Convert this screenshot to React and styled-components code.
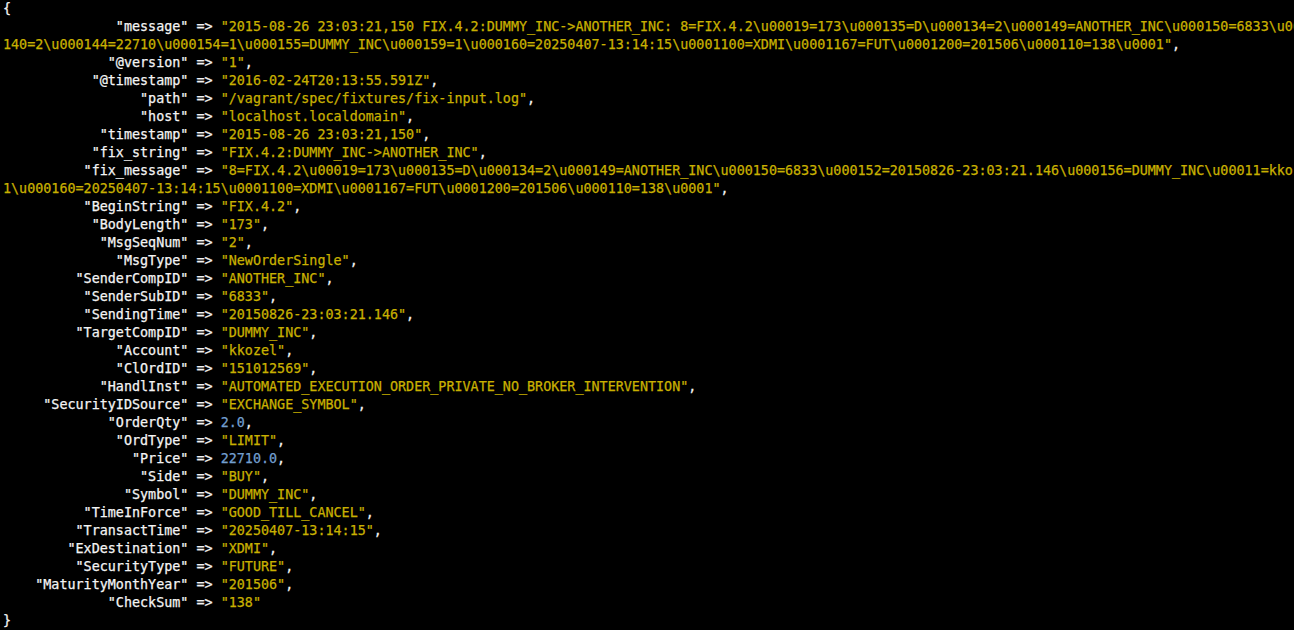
import React from 'react';
import styled, { createGlobalStyle } from 'styled-components';

const GlobalStyle = createGlobalStyle`
  html, body {
    margin:0;
    padding:0;
    background-color:#000;
  }
`;

const StTerminal = styled.div`
  width:1294px;
  height:630px;
  overflow:hidden;
  box-sizing:border-box;
  padding:0 0 0 3px;
  background-color:#000;
  color:#f4f4f4;
  font-family:"DejaVu Sans Mono", "Liberation Mono", monospace;
  font-size:13.4px;
  line-height:18px;
  -webkit-text-stroke:0.25px currentColor;
`;
const StLine = styled.div`
  display:flex;
  white-space:pre;
  height:18px;
`;
const StStr = styled.span`
  color:#c8b000;
`;
const StNum = styled.span`
  color:#729fcf;
`;

const KEY_WIDTH = 19;

const fields = [
  ['message', 's', '2015-08-26 23:03:21,150 FIX.4.2:DUMMY_INC->ANOTHER_INC: 8=FIX.4.2\\u00019=173\\u000135=D\\u000134=2\\u000149=ANOTHER_INC\\u000150=6833\\u000152=20150826-23:03:21.146\\u000156=DUMMY_INC\\u00011=kkozel\\u000111=151012569\\u000121=1\\u000122=8\\u000138=2\\u000', '140=2\\u000144=22710\\u000154=1\\u000155=DUMMY_INC\\u000159=1\\u000160=20250407-13:14:15\\u0001100=XDMI\\u0001167=FUT\\u0001200=201506\\u000110=138\\u0001'],
  ['@version', 's', '1'],
  ['@timestamp', 's', '2016-02-24T20:13:55.591Z'],
  ['path', 's', '/vagrant/spec/fixtures/fix-input.log'],
  ['host', 's', 'localhost.localdomain'],
  ['timestamp', 's', '2015-08-26 23:03:21,150'],
  ['fix_string', 's', 'FIX.4.2:DUMMY_INC->ANOTHER_INC'],
  ['fix_message', 's', '8=FIX.4.2\\u00019=173\\u000135=D\\u000134=2\\u000149=ANOTHER_INC\\u000150=6833\\u000152=20150826-23:03:21.146\\u000156=DUMMY_INC\\u00011=kkozel\\u000111=151012569\\u000121=1\\u000122=8\\u000138=2\\u000140=2\\u000144=22710\\u000154=1\\u000155=DUMMY_INC\\u000159=', '1\\u000160=20250407-13:14:15\\u0001100=XDMI\\u0001167=FUT\\u0001200=201506\\u000110=138\\u0001'],
  ['BeginString', 's', 'FIX.4.2'],
  ['BodyLength', 's', '173'],
  ['MsgSeqNum', 's', '2'],
  ['MsgType', 's', 'NewOrderSingle'],
  ['SenderCompID', 's', 'ANOTHER_INC'],
  ['SenderSubID', 's', '6833'],
  ['SendingTime', 's', '20150826-23:03:21.146'],
  ['TargetCompID', 's', 'DUMMY_INC'],
  ['Account', 's', 'kkozel'],
  ['ClOrdID', 's', '151012569'],
  ['HandlInst', 's', 'AUTOMATED_EXECUTION_ORDER_PRIVATE_NO_BROKER_INTERVENTION'],
  ['SecurityIDSource', 's', 'EXCHANGE_SYMBOL'],
  ['OrderQty', 'n', '2.0'],
  ['OrdType', 's', 'LIMIT'],
  ['Price', 'n', '22710.0'],
  ['Side', 's', 'BUY'],
  ['Symbol', 's', 'DUMMY_INC'],
  ['TimeInForce', 's', 'GOOD_TILL_CANCEL'],
  ['TransactTime', 's', '20250407-13:14:15'],
  ['ExDestination', 's', 'XDMI'],
  ['SecurityType', 's', 'FUTURE'],
  ['MaturityMonthYear', 's', '201506'],
  ['CheckSum', 's', '138'],
];

const Field = ({ name, type, value, wrapped, last }) => {
  const key = `    ${`"${name}"`.padStart(KEY_WIDTH)} => `;
  const comma = last ? '' : ',';
  if (type === 'n') {
    return (
      <StLine>{key}<StNum>{value}</StNum>{comma}</StLine>
    );
  }
  if (wrapped) {
    return (
      <>
        <StLine>{key}<StStr>{`"${value}`}</StStr></StLine>
        <StLine><StStr>{`${wrapped}"`}</StStr>{comma}</StLine>
      </>
    );
  }
  return (
    <StLine>{key}<StStr>{`"${value}"`}</StStr>{comma}</StLine>
  );
};

const App = () => (
  <>
    <GlobalStyle />
    <StTerminal>
      <StLine>{'{'}</StLine>
      {fields.map(([name, type, value, wrapped], i) => (
        <Field
          key={name}
          name={name}
          type={type}
          value={value}
          wrapped={wrapped}
          last={i === fields.length - 1}
        />
      ))}
      <StLine>{'}'}</StLine>
    </StTerminal>
  </>
);

export default App;
